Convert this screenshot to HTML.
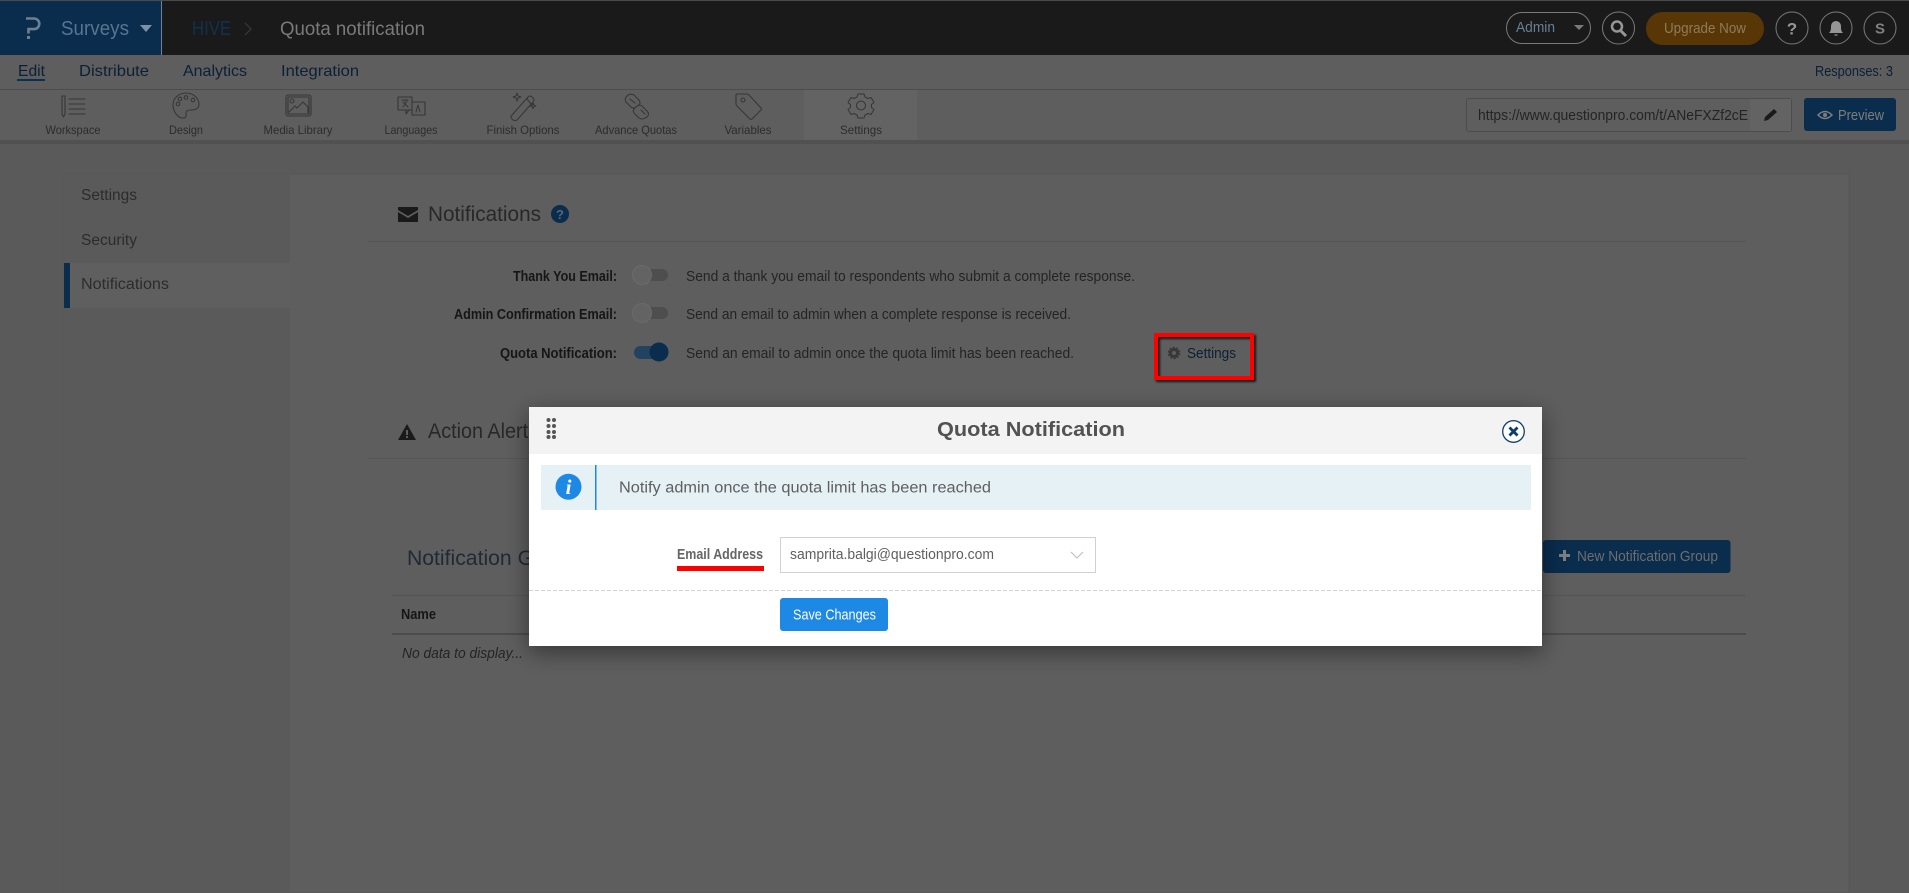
<!DOCTYPE html>
<html lang="en"><head><meta charset="utf-8"><title>Quota notification</title>
<style>
html,body{margin:0;padding:0;background:#5a5a5a;overflow:hidden}
svg{display:block}
text{font-family:"Liberation Sans",sans-serif}
.i{fill:none;stroke:#363636;stroke-width:1.05;stroke-linecap:round;stroke-linejoin:round}
.tl{font-size:12px;fill:#2c2c2c}
.nav{font-size:16px;fill:#0b2035}
.d{font-size:14.5px;fill:#242424}
.b{font-size:14.5px;font-weight:bold;fill:#161616}
.h{font-size:21px;fill:#282828}
.s{font-size:15.5px;fill:#2c2c2c}
</style></head><body>
<svg xmlns="http://www.w3.org/2000/svg" width="1909" height="893" viewBox="0 0 1909 893">
<defs>
<filter id="ms" x="-10%" y="-20%" width="120%" height="140%"><feDropShadow dx="0" dy="6" stdDeviation="12" flood-color="#000" flood-opacity=".45"/></filter>
<filter id="rs" x="-20%" y="-20%" width="140%" height="140%"><feDropShadow dx="2" dy="2" stdDeviation="1" flood-color="#000" flood-opacity=".8"/></filter>
</defs>
<rect width="1909" height="893" fill="#5a5a5a"/>
<!-- top bar -->
<rect width="1909" height="55" fill="#1a1a1a"/>
<rect width="1909" height="1" fill="#4a4a4a"/>
<rect width="161" height="54" y="1" fill="#0a2c4d"/>
<rect x="161" y="1" width="1" height="54" fill="#6d8398"/>
<path d="M26 18.500h8a5.300 5.300 0 0 1 0 10.600h-5.500v4.400" fill="none" stroke="#6c8092" stroke-width="2.600"/>
<rect x="27" y="36" width="3" height="3" fill="#6c8092"/>
<text x="61" y="35" font-size="20.500" fill="#587590" textLength="68" lengthAdjust="spacingAndGlyphs">Surveys</text>
<path d="M140 25h12l-6 7z" fill="#7c91a5"/>
<text x="192" y="35" font-size="20" fill="#103150" textLength="39" lengthAdjust="spacingAndGlyphs">HIVE</text>
<path d="M245 23l6 6-6 6" fill="none" stroke="#3a3a3a" stroke-width="1.200"/>
<text x="280" y="35" font-size="19.500" fill="#7a7a7a" textLength="145" lengthAdjust="spacingAndGlyphs">Quota notification</text>
<rect x="1506.500" y="12.500" width="84" height="31" rx="15.500" fill="none" stroke="#7a7a7a"/>
<text x="1516" y="32" font-size="14.500" fill="#687f94" textLength="39" lengthAdjust="spacingAndGlyphs">Admin</text>
<path d="M1574 25h10l-5 5z" fill="#7a7a7a"/>
<circle cx="1618.500" cy="28" r="16" fill="none" stroke="#7a7a7a"/>
<circle cx="1617" cy="26.500" r="5" fill="none" stroke="#969696" stroke-width="2.500"/><path d="M1621 31l5 5" stroke="#969696" stroke-width="3"/>
<rect x="1646" y="12" width="118" height="33" rx="16.500" fill="#583606"/>
<text x="1664" y="33" font-size="14.500" fill="#8e7b5a" textLength="82" lengthAdjust="spacingAndGlyphs">Upgrade Now</text>
<circle cx="1792" cy="28" r="16" fill="none" stroke="#7a7a7a"/>
<text x="1792" y="34.500" font-size="17" font-weight="bold" text-anchor="middle" fill="#969696">?</text>
<circle cx="1836" cy="28" r="16" fill="none" stroke="#7a7a7a"/>
<path d="M1829 33c2-2 2-4 2-7a5 5 0 0 1 10 0c0 3 0 5 2 7zM1834 34.500a2.200 2.200 0 0 0 4 0z" fill="#969696"/>
<circle cx="1880" cy="28" r="16" fill="none" stroke="#7a7a7a"/>
<text x="1880" y="33.500" font-size="15" font-weight="bold" text-anchor="middle" fill="#808080">S</text>
<!-- sub nav -->
<rect y="55" width="1909" height="85" fill="#5e5e5e"/>
<rect y="89" width="1909" height="1" fill="#4c4c4c"/>
<rect y="140" width="1909" height="4" fill="#515151"/>
<text class="nav" x="18" y="76" textLength="27" lengthAdjust="spacingAndGlyphs">Edit</text>
<rect x="17" y="79" width="28" height="2" fill="#0b2f55"/>
<text class="nav" x="79" y="76" textLength="70" lengthAdjust="spacingAndGlyphs">Distribute</text>
<text class="nav" x="183" y="76" textLength="64" lengthAdjust="spacingAndGlyphs">Analytics</text>
<text class="nav" x="281" y="76" textLength="78" lengthAdjust="spacingAndGlyphs">Integration</text>
<text x="1815" y="76" font-size="14.500" fill="#0b2035" textLength="78" lengthAdjust="spacingAndGlyphs">Responses: 3</text>
<!-- tools -->
<rect x="804" y="90" width="113" height="50" fill="#636363"/>
<g text-anchor="middle">
<text class="tl" x="73" y="134" textLength="55" lengthAdjust="spacingAndGlyphs">Workspace</text>
<text class="tl" x="186" y="134" textLength="34" lengthAdjust="spacingAndGlyphs">Design</text>
<text class="tl" x="298" y="134" textLength="69" lengthAdjust="spacingAndGlyphs">Media Library</text>
<text class="tl" x="411" y="134" textLength="53" lengthAdjust="spacingAndGlyphs">Languages</text>
<text class="tl" x="523" y="134" textLength="73" lengthAdjust="spacingAndGlyphs">Finish Options</text>
<text class="tl" x="636" y="134" textLength="82" lengthAdjust="spacingAndGlyphs">Advance Quotas</text>
<text class="tl" x="748" y="134" textLength="47" lengthAdjust="spacingAndGlyphs">Variables</text>
<text class="tl" x="861" y="134" textLength="42" lengthAdjust="spacingAndGlyphs">Settings</text>
</g>
<g class="i">
<path d="M62 96h3v18l-1.500 3-1.500-3zM69 99h16M69 104h16M69 109h16M69 114h16"/>
<path d="M186 93c-7 0-13 5-13 12s5 13 10 13c4 0 3-3 3-5s2-3 5-3c5 0 8-2 8-6 0-6-6-11-13-11z"/>
<circle cx="180" cy="99" r="1.800"/><circle cx="186" cy="97.500" r="1.800"/><circle cx="193" cy="100" r="1.800"/><circle cx="178" cy="104" r="1.800"/>
<rect x="286" y="95" width="25" height="21" rx="2"/><rect x="288" y="97" width="21" height="17"/>
<circle cx="292" cy="101" r="2"/><path d="M289 112l6-6 2 2 6-6 5 5v6"/>
<path d="M398 97h14v13h-14zM412 102h13v13h-13zM412 110h-3l-3 4v-4"/><path d="M402 100h6M405 100v1M403 107l4-6M403 102l5 5M416 112l2-7 2 7"/>
<path d="M512 115l16-18q2-2 4 0l1 1q2 2 0 4l-16 18q-2 1-4 0l-1-1q-2-2 0-4zM527 99l4 5M517 93l1 3 3 1-3 1-1 3-1-3-3-1 3-1zM533 103l.8 2 2 .8-2 .8-.8 2-.8-2-2-.8 2-.8z"/>
<path d="M627 96q3-3 7-1l5 5q2 3 0 5l-3 2q-3 2-5 0l-5-5q-2-3 1-6zM636 107q3-3 6-1l5 5q3 3 0 6l-2 1q-3 2-6 0l-5-5q-2-3 2-6zM630 99l5 4M641 110l4 4"/>
<path d="M737 94h9q2 0 3 1l12 13q1 1 0 2l-9 9q-1 1-2 0l-13-13q-1-1-1-2v-9q0-1 1-1z"/><circle cx="743" cy="100" r="2"/>
<circle cx="861" cy="105.500" r="4.500"/>
<path d="M858 94h6l1 3 3 1.500 3-1 3 5-2.500 2v3l2.500 2-3 5-3-1-3 1.500-1 3h-6l-1-3-3-1.500-3 1-3-5 2.500-2v-3l-2.500-2 3-5 3 1 3-1.500z"/>
</g>
<!-- URL / preview -->
<rect x="1466.500" y="98.500" width="325" height="33" rx="2" fill="#5e5e5e" stroke="#4c4c4c"/>
<rect x="1750" y="99" width="41" height="32" fill="#636363"/>
<text x="1478" y="120" font-size="14.500" fill="#242424" textLength="270" lengthAdjust="spacingAndGlyphs">https://www.questionpro.com/t/ANeFXZf2cE</text>
<path d="M1764 121l1-4 9-8 3 3-9 8z" fill="#1a1a1a"/>
<rect x="1804" y="98" width="92" height="33" rx="3" fill="#0a2c4d"/>
<path d="M1818 115q7-7 14 0q-7 7-14 0z" fill="none" stroke="#7e7e7e" stroke-width="1.500"/><circle cx="1825" cy="115" r="2" fill="#7e7e7e"/>
<text x="1838" y="120" font-size="14.500" fill="#7e7e7e" textLength="46" lengthAdjust="spacingAndGlyphs">Preview</text>
<!-- panel -->
<rect x="64" y="174" width="1785" height="719" fill="#5e5e5e" stroke="#555"/>
<rect x="64" y="174" width="226" height="719" fill="#5a5a5a"/>
<rect x="64" y="263" width="226" height="45" fill="#5f5f5f"/>
<rect x="64" y="263" width="6" height="45" fill="#0a2c4d"/>
<text class="s" x="81" y="200" textLength="56" lengthAdjust="spacingAndGlyphs">Settings</text>
<text class="s" x="81" y="245" textLength="56" lengthAdjust="spacingAndGlyphs">Security</text>
<text class="s" x="81" y="289" textLength="88" lengthAdjust="spacingAndGlyphs">Notifications</text>
<path d="M398 207h20v3l-10 6-10-6zM398 212l10 6 10-6v10h-20z" fill="#1a1a1a"/>
<text class="h" x="428" y="221" textLength="113" lengthAdjust="spacingAndGlyphs">Notifications</text>
<circle cx="560" cy="214" r="9" fill="#0a2c4d"/>
<text x="560" y="219" font-size="13" font-weight="bold" text-anchor="middle" fill="#56677a">?</text>
<rect x="368" y="241" width="1378" height="1" fill="#555"/>
<g text-anchor="end">
<text class="b" x="617" y="281" textLength="104" lengthAdjust="spacingAndGlyphs">Thank You Email:</text>
<text class="b" x="617" y="319" textLength="163" lengthAdjust="spacingAndGlyphs">Admin Confirmation Email:</text>
<text class="b" x="617" y="358" textLength="117" lengthAdjust="spacingAndGlyphs">Quota Notification:</text>
</g>
<rect x="634" y="269" width="34" height="12" rx="6" fill="#4e4e4e"/><circle cx="642" cy="275" r="9.500" fill="#636363" stroke="#6b6b6b"/>
<rect x="634" y="307" width="34" height="12" rx="6" fill="#4e4e4e"/><circle cx="642" cy="313" r="9.500" fill="#636363" stroke="#6b6b6b"/>
<rect x="634" y="346" width="34" height="13" rx="6.500" fill="#22425f"/><circle cx="659" cy="352" r="9.500" fill="#0a2c4d"/>
<text class="d" x="686" y="281" textLength="449" lengthAdjust="spacingAndGlyphs">Send a thank you email to respondents who submit a complete response.</text>
<text class="d" x="686" y="319" textLength="385" lengthAdjust="spacingAndGlyphs">Send an email to admin when a complete response is received.</text>
<text class="d" x="686" y="358" textLength="388" lengthAdjust="spacingAndGlyphs">Send an email to admin once the quota limit has been reached.</text>
<rect x="1156" y="335" width="96" height="43" fill="none" stroke="#f00" stroke-width="4" filter="url(#rs)"/>
<circle cx="1174" cy="353" r="3.500" fill="none" stroke="#383838" stroke-width="3"/><circle cx="1174" cy="353" r="5.500" fill="none" stroke="#383838" stroke-width="1.500" stroke-dasharray="2 1.500"/>
<text x="1187" y="358" font-size="14.500" fill="#0b2035" textLength="49" lengthAdjust="spacingAndGlyphs">Settings</text>
<path fill-rule="evenodd" d="M398 440l9-16 9 16zM406 430h2v5h-2zM406 436h2v2h-2z" fill="#1a1a1a"/>
<text class="h" x="428" y="438" textLength="110" lengthAdjust="spacingAndGlyphs">Action Alerts</text>
<rect x="368" y="458" width="1378" height="1" fill="#555"/>
<text class="h" x="407" y="565" textLength="180" lengthAdjust="spacingAndGlyphs" style="fill:#1f2a35">Notification Groups</text>
<rect x="392" y="595" width="1354" height="1" fill="#555"/>
<text class="b" x="401" y="619" textLength="35" lengthAdjust="spacingAndGlyphs">Name</text>
<rect x="392" y="633" width="1354" height="2" fill="#4c4c4c"/>
<text x="402" y="658" font-size="14.500" font-style="italic" fill="#242424" textLength="121" lengthAdjust="spacingAndGlyphs">No data to display...</text>
<rect x="1543" y="540" width="187.500" height="33" rx="3" fill="#0a2c4d"/>
<path d="M1559 555.500h11M1564.500 550v11" stroke="#7e7e7e" stroke-width="3"/>
<text x="1577" y="561" font-size="14.500" fill="#6e6e6e" textLength="141" lengthAdjust="spacingAndGlyphs">New Notification Group</text>
<!-- modal -->
<rect x="529" y="407" width="1013" height="239" fill="#fff" filter="url(#ms)"/>
<rect x="529" y="407" width="1013" height="47" fill="#f3f3f3"/>
<g fill="#555"><circle cx="548.500" cy="420" r="2"/><circle cx="554" cy="420" r="2"/><circle cx="548.500" cy="426" r="2"/><circle cx="554" cy="426" r="2"/><circle cx="548.500" cy="432" r="2"/><circle cx="554" cy="432" r="2"/><circle cx="548.500" cy="437" r="2"/><circle cx="554" cy="437" r="2"/></g>
<text x="937" y="436" font-size="20.500" font-weight="bold" fill="#525252" textLength="188" lengthAdjust="spacingAndGlyphs">Quota Notification</text>
<circle cx="1513.500" cy="431.500" r="10.800" fill="#fff" stroke="#0f4170" stroke-width="1.300"/>
<path d="M1509.500 427.500l8 8M1517.500 427.500l-8 8" stroke="#0f3d68" stroke-width="2.800"/>
<rect x="541" y="465" width="990" height="45" fill="#e6f1f6"/>
<rect x="595" y="465" width="1.500" height="45" fill="#1e88e5"/>
<circle cx="568.500" cy="486.700" r="13" fill="#1e88e5"/>
<text x="568.500" y="494" font-size="21" font-weight="bold" font-style="italic" text-anchor="middle" fill="#fff" style="font-family:'Liberation Serif',serif">i</text>
<text x="619" y="492.500" font-size="15.500" fill="#5f5f5f" textLength="372" lengthAdjust="spacingAndGlyphs">Notify admin once the quota limit has been reached</text>
<text x="677" y="559" font-size="14.500" font-weight="bold" fill="#666" textLength="86" lengthAdjust="spacingAndGlyphs">Email Address</text>
<rect x="677" y="566" width="87" height="5" fill="#f00"/>
<rect x="780.500" y="537.500" width="315" height="35" fill="#fff" stroke="#ccd2d8"/>
<text x="790" y="559" font-size="14.500" fill="#5f5f5f" textLength="204" lengthAdjust="spacingAndGlyphs">samprita.balgi@questionpro.com</text>
<path d="M1071 552l6 6 6-6" fill="none" stroke="#b5bcc4" stroke-width="1"/>
<path d="M529 590.500H1542" stroke="#ced4da" stroke-dasharray="4 2"/>
<rect x="780" y="598" width="108" height="33" rx="3" fill="#1e88e5"/>
<text x="793" y="619.500" font-size="14.500" fill="#fff" textLength="83" lengthAdjust="spacingAndGlyphs">Save Changes</text>
</svg>
</body></html>
